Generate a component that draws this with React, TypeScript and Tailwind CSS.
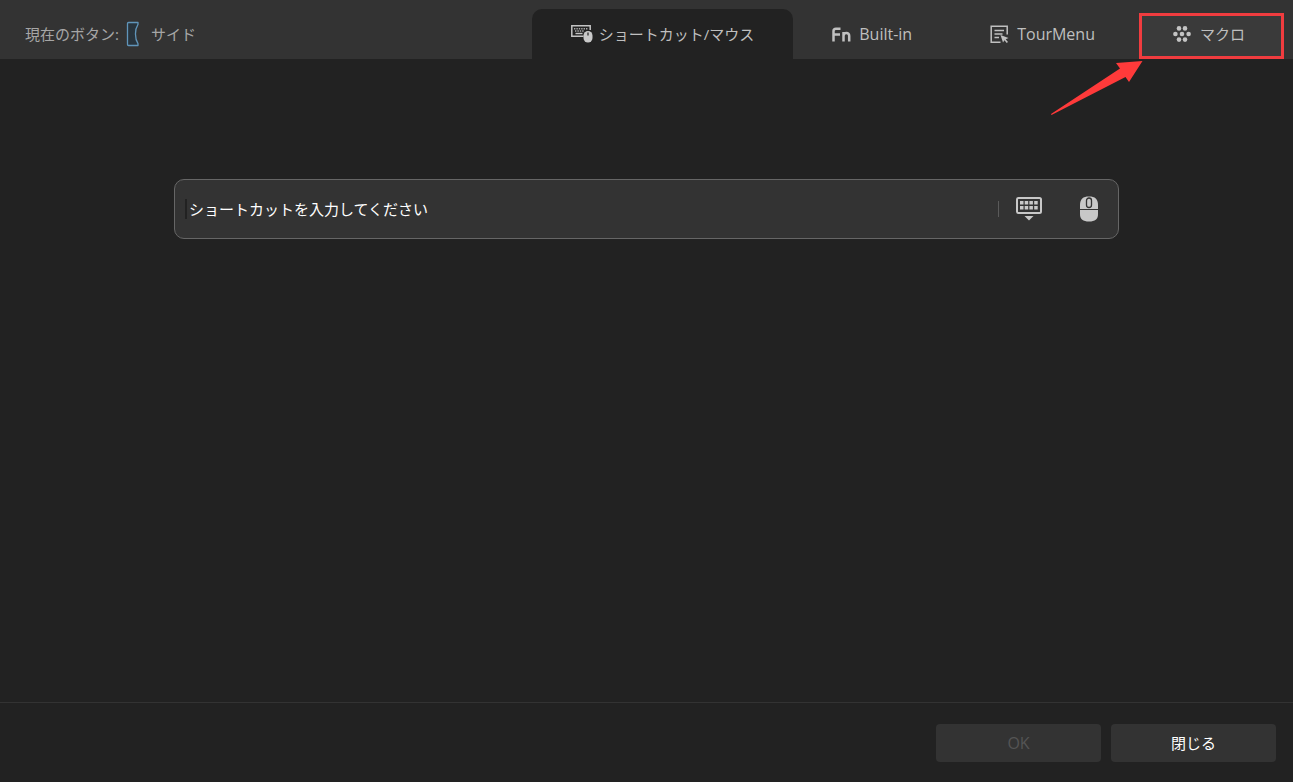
import { useState } from 'react';
import type { ReactNode } from 'react';

type TabId = 'shortcut' | 'builtin' | 'tourmenu' | 'macro';

function SideButtonIcon() {
  return (
    <svg width="14" height="26" viewBox="0 0 14 26" fill="#28343d" stroke="#6095ba" strokeWidth="1.3" strokeLinejoin="round">
      <path d="M2.5 1.5H12v1.8C8.6 8.5 8.6 17.5 12 22.7V24.5H2.5Q1.5 24.5 1.5 23.5V2.5Q1.5 1.5 2.5 1.5Z" />
    </svg>
  );
}

function KeyboardMouseIcon() {
  return (
    <svg width="22" height="18" viewBox="0 0 22 18" fill="none">
      <path d="M12.5 11.3H.8V.8H19.2V5" stroke="#c4c4c4" strokeWidth="1.5" />
      <path d="M3 3.7H16.5M4 6H13" stroke="#aaa" strokeWidth="1.4" strokeDasharray="1.4 1" />
      <path d="M4.5 8.5H11.5" stroke="#c4c4c4" strokeWidth="1.4" />
      <rect x="12.5" y="6" width="9" height="11.5" rx="4.5" fill="#c9c9c9" />
      <path d="M17 7.5V10.5" stroke="#222" strokeWidth="1.2" />
    </svg>
  );
}

function FnIcon() {
  return (
    <svg width="19" height="15" viewBox="0 0 19 15" fill="none" stroke="#c0c0c0" strokeWidth="2.5">
      <path d="M1.5 14.5V4Q1.5 1.7 4 1.7H8.5M1.5 7.5H8" />
      <path d="M11.5 14.5V5M11.5 8.5C12 5.5 17.2 5 17.2 8.8V14.5" />
    </svg>
  );
}

function TourMenuIcon() {
  return (
    <svg width="19" height="19" viewBox="0 0 19 19" fill="none" stroke="#c0c0c0" strokeWidth="1.5">
      <path d="M10.5 17.2H1.2V1.2H17.2V9.5" />
      <path d="M4.5 5.5H14M4.5 9H12.5M4.5 12.5H9" />
      <path d="M10.5 10 18.5 13 15.7 14.2 18 17 16.7 18 14.5 15.3 13 17.5Z" fill="#c0c0c0" stroke="none" />
    </svg>
  );
}

function MacroIcon() {
  return (
    <svg width="18" height="16" viewBox="0 0 18 16" fill="#c4c4c4">
      <circle cx="6" cy="2.4" r="2.3" />
      <circle cx="12" cy="2.4" r="2.3" />
      <circle cx="2.4" cy="8" r="2.3" />
      <circle cx="9" cy="8" r="2.3" />
      <circle cx="15.6" cy="8" r="2.3" />
      <circle cx="6" cy="13.6" r="2.3" />
      <circle cx="12" cy="13.6" r="2.3" />
    </svg>
  );
}

function KeyboardIcon() {
  return (
    <svg width="26" height="24" viewBox="0 0 26 24" fill="#c8c8c8">
      <rect x="1" y="1" width="24" height="15" rx="1.5" fill="none" stroke="#c8c8c8" strokeWidth="2" />
      <path d="M4 4h3.5v3.5H4zM8.7 4h3.5v3.5H8.7zM13.4 4h3.5v3.5H13.4zM18.2 4h3.5v3.5H18.2z" />
      <path d="M4 9h3.5v3.5H4zM8.7 9h3.5v3.5H8.7zM13.4 9h3.5v3.5H13.4zM18.2 9h3.5v3.5H18.2z" />
      <path d="M8.5 19H17.5L13 23.5Z" />
    </svg>
  );
}

function MouseIcon() {
  return (
    <svg width="18" height="26" viewBox="0 0 18 26" fill="none">
      <path d="M0 9C0 3 3 .5 9 .5S18 3 18 9V18C18 23.5 15 25.5 9 25.5S0 23.5 0 18Z" fill="#c8c8c8" />
      <path d="M0 13.5H18" stroke="#333" />
      <rect x="6.5" y="2" width="5" height="9.5" rx="2.5" stroke="#333" strokeWidth="1.3" />
    </svg>
  );
}

interface TabProps {
  active: boolean;
  icon: ReactNode;
  label: string;
  className: string;
  onClick: () => void;
}

function Tab({ active, icon, label, className, onClick }: TabProps) {
  return (
    <button
      role="tab"
      aria-selected={active}
      onClick={onClick}
      className={`flex h-[50px] items-center rounded-t-[10px] px-[39px] whitespace-nowrap text-[#bfbfbf] ${className} ${
        active ? 'bg-[#222222]' : ''
      }`}
    >
      {icon}
      {label}
    </button>
  );
}

export default function App() {
  const [tab, setTab] = useState<TabId>('shortcut');
  const [shortcut, setShortcut] = useState('');

  return (
    <div className="flex min-h-screen flex-col bg-[#222222] font-['Open_Sans','Noto_Sans_CJK_JP',sans-serif] text-[15px] leading-5 font-normal">
      <header className="flex items-end justify-between bg-[#333333] pt-[9px] pr-[9px] pl-[25px]">
        <div className="flex h-[50px] items-center text-[#a6a6a6]">
          <span className="mr-[7px]">現在のボタン:</span>
          <SideButtonIcon />
          <span className="ml-[11px]">サイド</span>
        </div>

        <div role="tablist" className="flex">
          <Tab
            active={tab === 'shortcut'}
            icon={<KeyboardMouseIcon />}
            label="ショートカット/マウス"
            className="gap-1.5"
            onClick={() => setTab('shortcut')}
          />
          <Tab
            active={tab === 'builtin'}
            icon={<FnIcon />}
            label="Built-in"
            className="gap-2 text-base"
            onClick={() => setTab('builtin')}
          />
          <Tab
            active={tab === 'tourmenu'}
            icon={<TourMenuIcon />}
            label="TourMenu"
            className="gap-2 text-base"
            onClick={() => setTab('tourmenu')}
          />
          <div className="relative isolate">
            <Tab
              active={tab === 'macro'}
              icon={<MacroIcon />}
              label="マクロ"
              className="gap-[9px]"
              onClick={() => setTab('macro')}
            />
            <div className="pointer-events-none absolute top-1 right-0 bottom-0 left-[5px] -z-10 border-3 border-[#f03c3f] bg-[#3a3a3a]" />
            <svg
              className="pointer-events-none absolute top-[51px] right-[141px]"
              width="93"
              height="56"
              viewBox="0 0 93 56"
              fill="#ff3a3a"
            >
              <path d="M92.5 1 66 3 70 8.5 1 54 1.5 55 75.5 17 79 22Z" />
            </svg>
          </div>
        </div>
      </header>

      <main className="flex-1 px-[174px] pt-[120px]">
        <div className="flex h-[60px] items-center rounded-[10px] border border-[#666666] bg-[#333333] pr-5 pl-2.5">
          <span className="h-5 w-0.5 bg-[#222222]" />
          <input
            type="text"
            aria-label="ショートカット"
            value={shortcut}
            onChange={(e) => setShortcut(e.target.value)}
            placeholder="ショートカットを入力してください"
            className="min-w-0 flex-1 bg-transparent pl-0.5 text-white outline-none placeholder:text-white"
          />
          <span className="mr-[17px] h-4 w-px bg-[#5a5a5a]" />
          <button aria-label="キーボード" className="mr-[38px]">
            <KeyboardIcon />
          </button>
          <button aria-label="マウス">
            <MouseIcon />
          </button>
        </div>
      </main>

      <footer className="flex justify-end gap-2.5 border-t border-t-[#333333] pt-[21px] pr-[17px] pb-5">
        <button disabled className="h-[38px] w-[165px] rounded bg-[#333333] text-base text-[#555555]">
          OK
        </button>
        <button className="h-[38px] w-[165px] rounded bg-[#333333] text-white">閉じる</button>
      </footer>
    </div>
  );
}
